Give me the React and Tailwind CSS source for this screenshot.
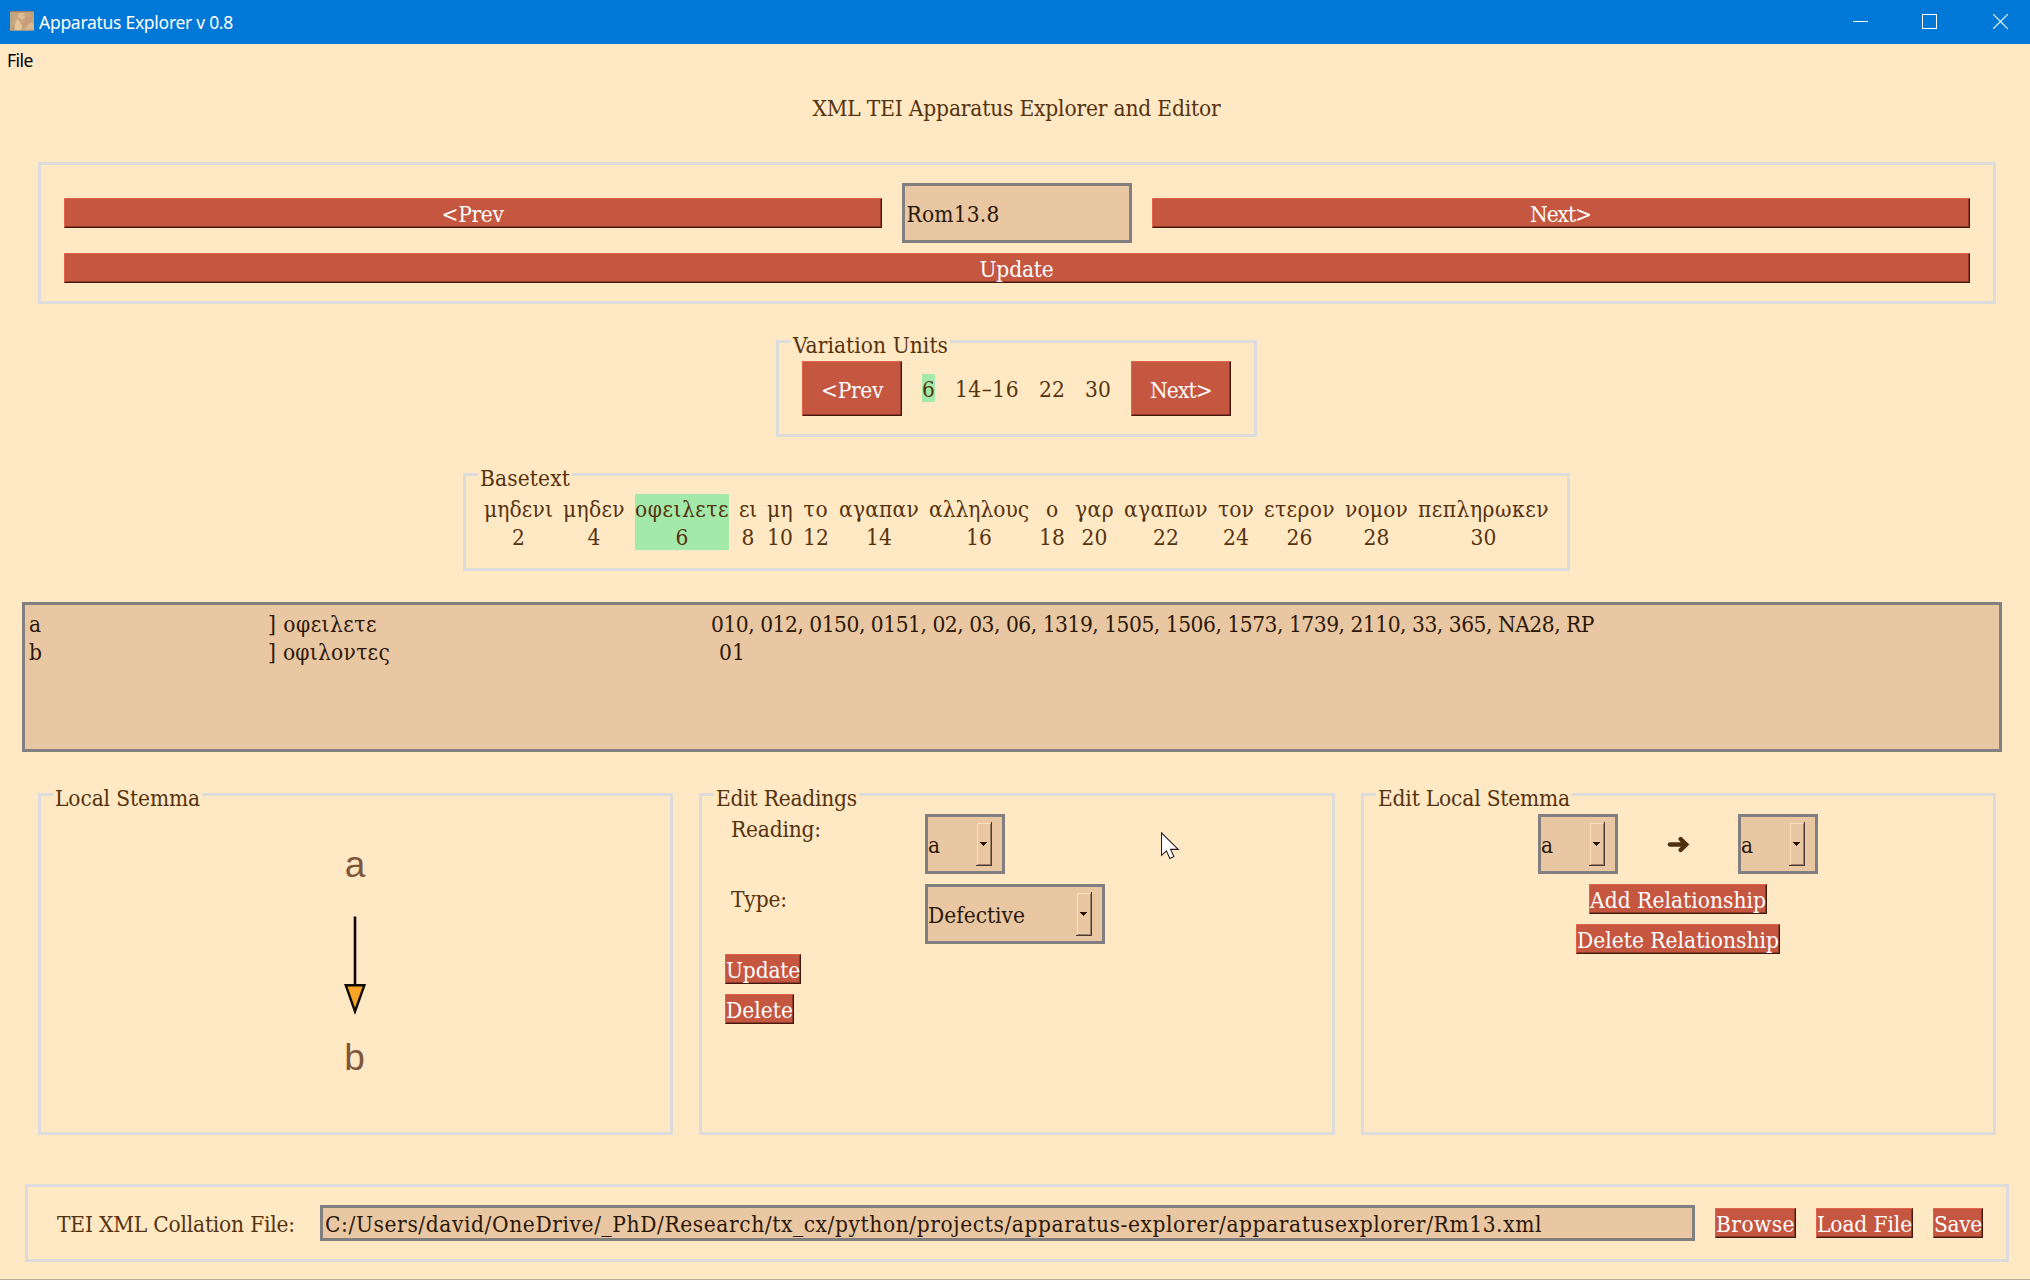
import { useLayoutEffect, useRef, useState } from "react";

/* Text run tracked so that its advance equals `w` pixels. */
function T({ w, children, className = "" }) {
  const ref = useRef(null);
  const [tracking, setTracking] = useState(0);
  useLayoutEffect(() => {
    const natural = ref.current.getBoundingClientRect().width;
    setTracking((w - natural) / [...children].length);
  }, [w, children]);
  return (
    <span className={"block h-7 shrink-0 whitespace-pre leading-[30px] " + className}>
      <span ref={ref} style={{ letterSpacing: tracking }}>{children}</span>
    </span>
  );
}

function Button({ w, children, className = "h-[30px]" }) {
  return (
    <button
      className={
        "flex shrink-0 justify-center border border-t-[#e2614a] border-l-[#e2614a] border-r-[#43190f] border-b-[#43190f] bg-[#c5563f] text-white shadow-[inset_-1px_-1px_0_#8d3a2b] " +
        className
      }
    >
      <T w={w}>{children}</T>
    </button>
  );
}

function Frame({ title, titleWidth, className = "", children }) {
  return (
    <section className={"relative shrink-0 border-[3px] border-[#dcdcdc] " + className}>
      {title && (
        <h2 className="absolute -top-[13px] left-3 bg-[#ffe8c4] px-0.5">
          <T w={titleWidth}>{title}</T>
        </h2>
      )}
      {children}
    </section>
  );
}

function Select({ value, w, className = "w-20" }) {
  return (
    <div className={"flex h-[60px] shrink-0 items-center justify-between border-[3px] border-[#808080] bg-[#e9c7a3] pr-2.5 text-[#2b1708] " + className}>
      <T w={w}>{value}</T>
      <span className="flex h-11 w-4 border-r border-b border-[#4b3836] pt-px pl-px">
        <span className="flex flex-1 items-center justify-center border border-t-[#ffe0b8] border-l-[#ffe0b8] border-r-[#9a8068] border-b-[#9a8068]">
          <svg width="7" height="4" viewBox="0 0 7 4" shapeRendering="crispEdges" className="-mt-px -ml-px">
            <path d="M0 0H7V1H6V2H5V3H4V4H3V3H2V2H1V1H0Z" fill="#2b1200" />
          </svg>
        </span>
      </span>
    </div>
  );
}

function TitleBar() {
  return (
    <header className="flex h-11 shrink-0 bg-[#0078d7] pl-2.5 font-['Noto_Sans'] text-[17.5px] text-white">
      <svg width="24" height="20" viewBox="0 0 24 20" className="mt-[11px]">
        <rect width="24" height="20" fill="#c9a67c" />
        <path d="M0 0H24V1.2H0Z" fill="#9b7f66" />
        <path d="M9 2H15L13 5L16 6L12 9L8 6Z" fill="#dfc096" />
        <path d="M5 19V14L7 8L10 11L12 15L11 19Z" fill="#e6c79a" />
        <path d="M15 19L18 14L22 11L24 15V18Z" fill="#dcb98c" />
        <path d="M0 3H4L3 9L1 13H0Z" fill="#b8a486" />
        <path d="M15 6H22V10L18 12L14 16L12 13L15 10Z" fill="#c99a7c" />
        <path d="M20 2H24V7L21 5Z" fill="#b9a27c" />
        <path d="M1 14H4V19H1Z" fill="#b9a27f" />
        <path d="M0 19H24V20H0Z" fill="#8f9c9c" />
      </svg>
      <T w={194} className="mt-[10px] ml-[5px] !leading-6">Apparatus Explorer v 0.8</T>
      <div className="ml-auto flex gap-[55px] pt-3.5 pr-[22px]">
        <svg width="15" height="15" viewBox="0 0 15 15" shapeRendering="crispEdges"><path d="M0 7.5H15" stroke="#fff" /></svg>
        <svg width="15" height="15" viewBox="0 0 15 15" shapeRendering="crispEdges" className="-ml-px mr-px"><path d="M.5 .5H14.5V14.5H.5Z" fill="none" stroke="#fff" /></svg>
        <svg width="15" height="15" viewBox="0 0 15 15"><path d="M.3 .3L14.7 14.7M14.7 .3L.3 14.7" stroke="#fff" strokeWidth="1.1" /></svg>
      </div>
    </header>
  );
}

const words = [
  ["μηδενι", "2", "w-[69px]", 69, 13],
  ["μηδεν", "4", "w-[62px]", 62, 13],
  ["οφειλετε", "6", "w-[94px] bg-[#a3eaaa]", 94, 13],
  ["ει", "8", "w-[18px]", 18, 13],
  ["μη", "10", "w-[26px]", 26, 26],
  ["το", "12", "w-[26px]", 25, 26],
  ["αγαπαν", "14", "w-[80px]", 80, 26],
  ["αλληλους", "16", "w-[100px]", 100, 26],
  ["ο", "18", "w-[26px]", 12, 26],
  ["γαρ", "20", "w-[39px]", 39, 26],
  ["αγαπων", "22", "w-[84px]", 84, 26],
  ["τον", "24", "w-[36px]", 36, 26],
  ["ετερον", "26", "w-[71px]", 71, 26],
  ["νομον", "28", "w-[63px]", 63, 26],
  ["πεπληρωκεν", "30", "w-[131px]", 131, 26],
];

export default function App() {
  return (
    <div className="relative flex h-[1280px] w-[2030px] flex-col overflow-hidden border-b border-[#b8ae9c] bg-[#ffe8c4] font-['DejaVu_Serif_Condensed','DejaVu_Serif',serif] text-[22.5px] text-[#55330f]">
      <TitleBar />
      <nav className="h-7 shrink-0 pt-1 pl-[7px] font-['Noto_Sans'] text-[17.5px] text-black">
        <T w={26} className="!leading-6">File</T>
      </nav>

      <div className="mt-[21px] flex shrink-0 flex-col items-center pl-[3px]">
        <h1><T w={408}>XML TEI Apparatus Explorer and Editor</T></h1>

        <Frame className="mt-[41px] flex h-[142px] w-[1958px] flex-col gap-2.5 px-[23px] pt-[18px]">
          <div className="flex items-center gap-5">
            <Button w={62} className="h-[30px] w-[818px]">{"<Prev"}</Button>
            <div className="flex h-[60px] w-[230px] items-center border-[3px] border-[#808080] bg-[#e9c7a3] pl-0.5 text-[#2b1708]">
              <T w={93}>Rom13.8</T>
            </div>
            <Button w={61} className="h-[30px] w-[818px]">{"Next>"}</Button>
          </div>
          <Button w={74} className="h-[30px] w-full">Update</Button>
        </Frame>

        <Frame title="Variation Units" titleWidth={155} className="mt-9 h-[97px] w-[481px] px-[23px] pt-[18px]">
          <div className="flex items-start gap-5">
            <Button w={62} className="h-[55px] w-[100px] pt-[13px]">{"<Prev"}</Button>
            <div className="flex gap-5 pt-[13px]">
              <T w={13} className="bg-[#a3eaaa]">6</T>
              <T w={64}>14–16</T>
              <T w={26}>22</T>
              <T w={26}>30</T>
            </div>
            <Button w={62} className="h-[55px] w-[100px] pt-[13px]">{"Next>"}</Button>
          </div>
        </Frame>

        <Frame title="Basetext" titleWidth={90} className="mt-9 flex h-[98px] w-[1107px] justify-between px-[18px] pt-[18px]">
          {words.map(([word, n, box, ww, nw]) => (
            <div key={n} className={"flex h-14 flex-col items-center " + box}>
              <T w={ww}>{word}</T>
              <T w={nw}>{n}</T>
            </div>
          ))}
        </Frame>
      </div>

      <div className="mt-[31px] ml-[22px] h-[150px] w-[1980px] shrink-0 border-[3px] border-[#808080] bg-[#e9c7a3] pt-1 pl-1 text-[#2b1708]">
        <div className="flex">
          <div className="w-[239px]"><T w={13}>a</T></div>
          <div className="w-[443px]"><T w={109}>] οφειλετε</T></div>
          <T w={883}>010, 012, 0150, 0151, 02, 03, 06, 1319, 1505, 1506, 1573, 1739, 2110, 33, 365, NA28, RP</T>
        </div>
        <div className="flex">
          <div className="w-[239px]"><T w={13}>b</T></div>
          <div className="w-[451px]"><T w={122}>] οφιλοντες</T></div>
          <T w={26}>01</T>
        </div>
      </div>

      <div className="mt-[41px] flex h-[342px] shrink-0 justify-between pr-[34px] pl-[38px]">
        <Frame title="Local Stemma" titleWidth={145} className="w-[635px]">
          <svg width="629" height="336" viewBox="0 0 629 336">
            <text x="314" y="81" textAnchor="middle" fontFamily="Liberation Sans, sans-serif" fontSize="37" fill="#7f563b">a</text>
            <path d="M314 120.5V189" stroke="#0c0805" strokeWidth="2.6" />
            <path d="M304.8 189.3H323.4L314 215.5Z" fill="#f5a428" stroke="#0c0805" strokeWidth="2.4" />
            <text x="313.5" y="273.5" textAnchor="middle" fontFamily="Liberation Sans, sans-serif" fontSize="37" fill="#7f563b">b</text>
          </svg>
        </Frame>

        <Frame title="Edit Readings" titleWidth={141} className="flex w-[636px] flex-col gap-2.5 pt-[18px] pl-[23px]">
          <div className="flex">
            <div className="w-[200px] pl-1.5"><T w={90}>Reading:</T></div>
            <Select value="a" w={13} />
          </div>
          <div className="flex">
            <div className="w-[200px] pl-1.5"><T w={56}>Type:</T></div>
            <Select value="Defective" w={97} className="w-[180px]" />
          </div>
          <Button w={74} className="h-[30px] w-[76px]">Update</Button>
          <Button w={67} className="h-[30px] w-[69px]">Delete</Button>
        </Frame>

        <Frame title="Edit Local Stemma" titleWidth={192} className="flex w-[635px] flex-col items-center gap-2.5 pt-[18px] pr-px">
          <div className="flex items-center">
            <Select value="a" w={13} />
            <svg width="120" height="60" viewBox="0 0 120 60">
              <path d="M52 30.5H66" stroke="#50300f" strokeWidth="4.6" strokeLinecap="round" />
              <path d="M62.6 25L68.2 30.5L62.6 36" fill="none" stroke="#50300f" strokeWidth="4.4" strokeLinecap="round" strokeLinejoin="miter" />
            </svg>
            <Select value="a" w={13} />
          </div>
          <Button w={176} className="h-[30px] w-[178px]">Add Relationship</Button>
          <Button w={202} className="h-[30px] w-[204px]">Delete Relationship</Button>
        </Frame>
      </div>

      <Frame className="mt-[49px] ml-[25px] flex h-[78px] w-[1984px] items-start pt-[18px] pl-[29px]">
        <div className="w-[263px] pt-1"><T w={238}>TEI XML Collation File:</T></div>
        <div className="flex h-9 w-[1375px] border-[3px] border-[#808080] bg-[#e9c7a3] pt-px pl-0.5 text-[#2b1708]">
          <T w={1217}>C:/Users/david/OneDrive/_PhD/Research/tx_cx/python/projects/apparatus-explorer/apparatusexplorer/Rm13.xml</T>
        </div>
        <div className="flex gap-5 pt-[3px] pl-5">
          <Button w={79} className="h-[30px] w-[81px]">Browse</Button>
          <Button w={95} className="h-[30px] w-[97px]">Load File</Button>
          <Button w={48} className="h-[30px] w-[50px]">Save</Button>
        </div>
      </Frame>

      <svg width="20" height="28" viewBox="0 0 20 28" className="absolute top-[832px] left-[1161px]">
        <path d="M.5 .8V23.4L5.4 18.8L8.9 26.4L12.9 24.6L9.6 17.4H17.2Z" fill="#fff" stroke="#2a1c26" strokeWidth="1.1" />
      </svg>
    </div>
  );
}
